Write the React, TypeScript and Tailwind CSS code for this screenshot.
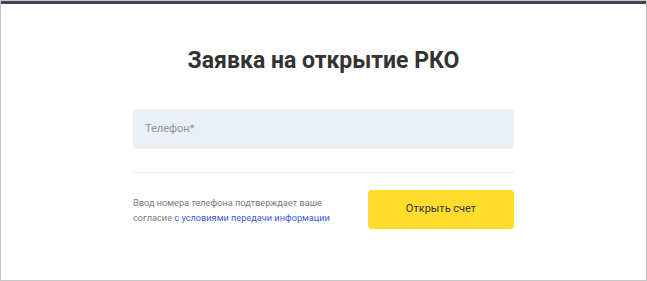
const App = () => {
  return (
    <div className="w-[647px] h-[281px] bg-white border border-[#c8c8c8] border-t-0 overflow-hidden font-['Roboto',sans-serif]">
      <div className="h-[4px] bg-[#3d4453] border-t border-[#c8c8c8]" />
      <div className="w-[381px] mx-auto pt-[41px]">
        <h1 className="text-center text-[23px] leading-[32px] font-bold text-[#333333]">
          Заявка на открытие РКО
        </h1>
        <div className="mt-[32px] h-[40px] bg-[#ebf0f7] rounded-[4px] flex items-center px-[12px]">
          <span className="text-[11px] text-[#8d939e]">Телефон*</span>
        </div>
        <div className="mt-[23px] h-px bg-[#eeeeee]" />
        <div className="mt-[17px] flex items-center justify-between">
          <p className="text-[9.2px] leading-[15px] text-[#7a7a7a] w-[210px]">
            Ввод номера телефона подтверждает ваше
            <br />
            согласие <span className="text-[#3c5ad8]">с условиями передачи информации</span>
          </p>
          <button className="w-[146px] h-[39px] bg-[#ffdd2d] rounded-[4px] text-[11px] text-[#333333]">
            Открыть счет
          </button>
        </div>
      </div>
    </div>
  );
};

export default App;
